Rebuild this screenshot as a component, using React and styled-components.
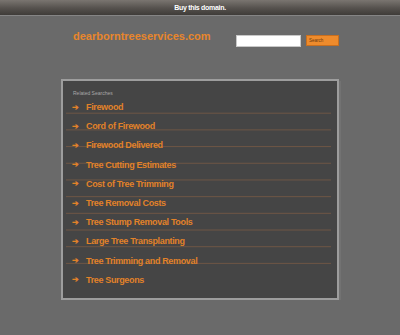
import styled, { createGlobalStyle } from "styled-components";

const GlobalStyle = createGlobalStyle`
	html, body {
		margin: 0;
		padding: 0;
		background: #6a6a6a;
		font-family: "Liberation Sans", Arial, sans-serif;
	}
`;

const TopBar = styled.div`
	height: 15px;
	background: linear-gradient(to bottom, #7a7570 0%, #55514d 55%, #3f3c39 100%);
	border-bottom: 1px solid #858585;
	display: flex;
	align-items: center;
	justify-content: center;
	color: #fff;
	font-size: 7px;
	font-weight: bold;
	letter-spacing: -0.3px;
`;

const Wrap = styled.div`
	width: 278px;
	margin: 0 auto;
`;

const Header = styled.div`
	display: flex;
	align-items: center;
	padding: 11px 0 0 12px;
	height: 26px;
`;

const Domain = styled.div`
	flex: 1;
	color: #e8862c;
	font-size: 11px;
	font-weight: bold;
	margin-top: -8px;
`;

const SearchBox = styled.div`
	display: flex;
	gap: 5px;
	padding-top: 2px;
`;

const Input = styled.div`
	width: 63px;
	height: 10px;
	background: #fff;
	border: 1px solid #c8c8c8;
`;

const Button = styled.div`
	width: 33px;
	height: 11px;
	background: #ee8b2c;
	border: 1px solid #c96f1e;
	box-sizing: border-box;
	color: #6a3a10;
	font-size: 4.5px;
	display: flex;
	align-items: center;
	padding-left: 2px;
`;

const Panel = styled.div`
	margin-top: 26px;
	height: 221px;
	box-sizing: border-box;
	background: #454545;
	border: 2px solid #9d9d9d;
	box-shadow: 2px 2px 0 #727272;
	padding: 9px 6px 0 2px;
`;

const Label = styled.div`
	color: #a8a8a8;
	font-size: 5px;
	line-height: 6px;
	padding-left: 8px;
`;

const List = styled.div`
	position: relative;
	margin-top: 1.5px;
	&::before {
		content: "";
		position: absolute;
		left: 1px;
		right: 0;
		top: -1px;
		height: 168px;
		background-image: linear-gradient(to bottom, transparent 16px, #6e5544 16px, #6e5544 16.7px, transparent 16.7px);
		background-size: 100% 16.7px;
	}
`;

const Item = styled.div`
	position: relative;
	height: 19.2px;
	display: flex;
	align-items: center;
	padding-left: 7px;
	color: #e28229;
	font-size: 9px;
	font-weight: bold;
	letter-spacing: -0.35px;
`;

const Arrow = styled.span`
	width: 14px;
	font-size: 8px;
`;

const items = [
	"Firewood",
	"Cord of Firewood",
	"Firewood Delivered",
	"Tree Cutting Estimates",
	"Cost of Tree Trimming",
	"Tree Removal Costs",
	"Tree Stump Removal Tools",
	"Large Tree Transplanting",
	"Tree Trimming and Removal",
	"Tree Surgeons",
];

const App = () => {
	return (
		<>
			<GlobalStyle />
			<TopBar>Buy this domain.</TopBar>
			<Wrap>
				<Header>
					<Domain>dearborntreeservices.com</Domain>
					<SearchBox>
						<Input />
						<Button>Search</Button>
					</SearchBox>
				</Header>
				<Panel>
					<Label>Related Searches</Label>
					<List>
						{items.map((t) => (
							<Item key={t}>
								<Arrow>➔</Arrow>
								{t}
							</Item>
						))}
					</List>
				</Panel>
			</Wrap>
		</>
	);
};

export default App;
